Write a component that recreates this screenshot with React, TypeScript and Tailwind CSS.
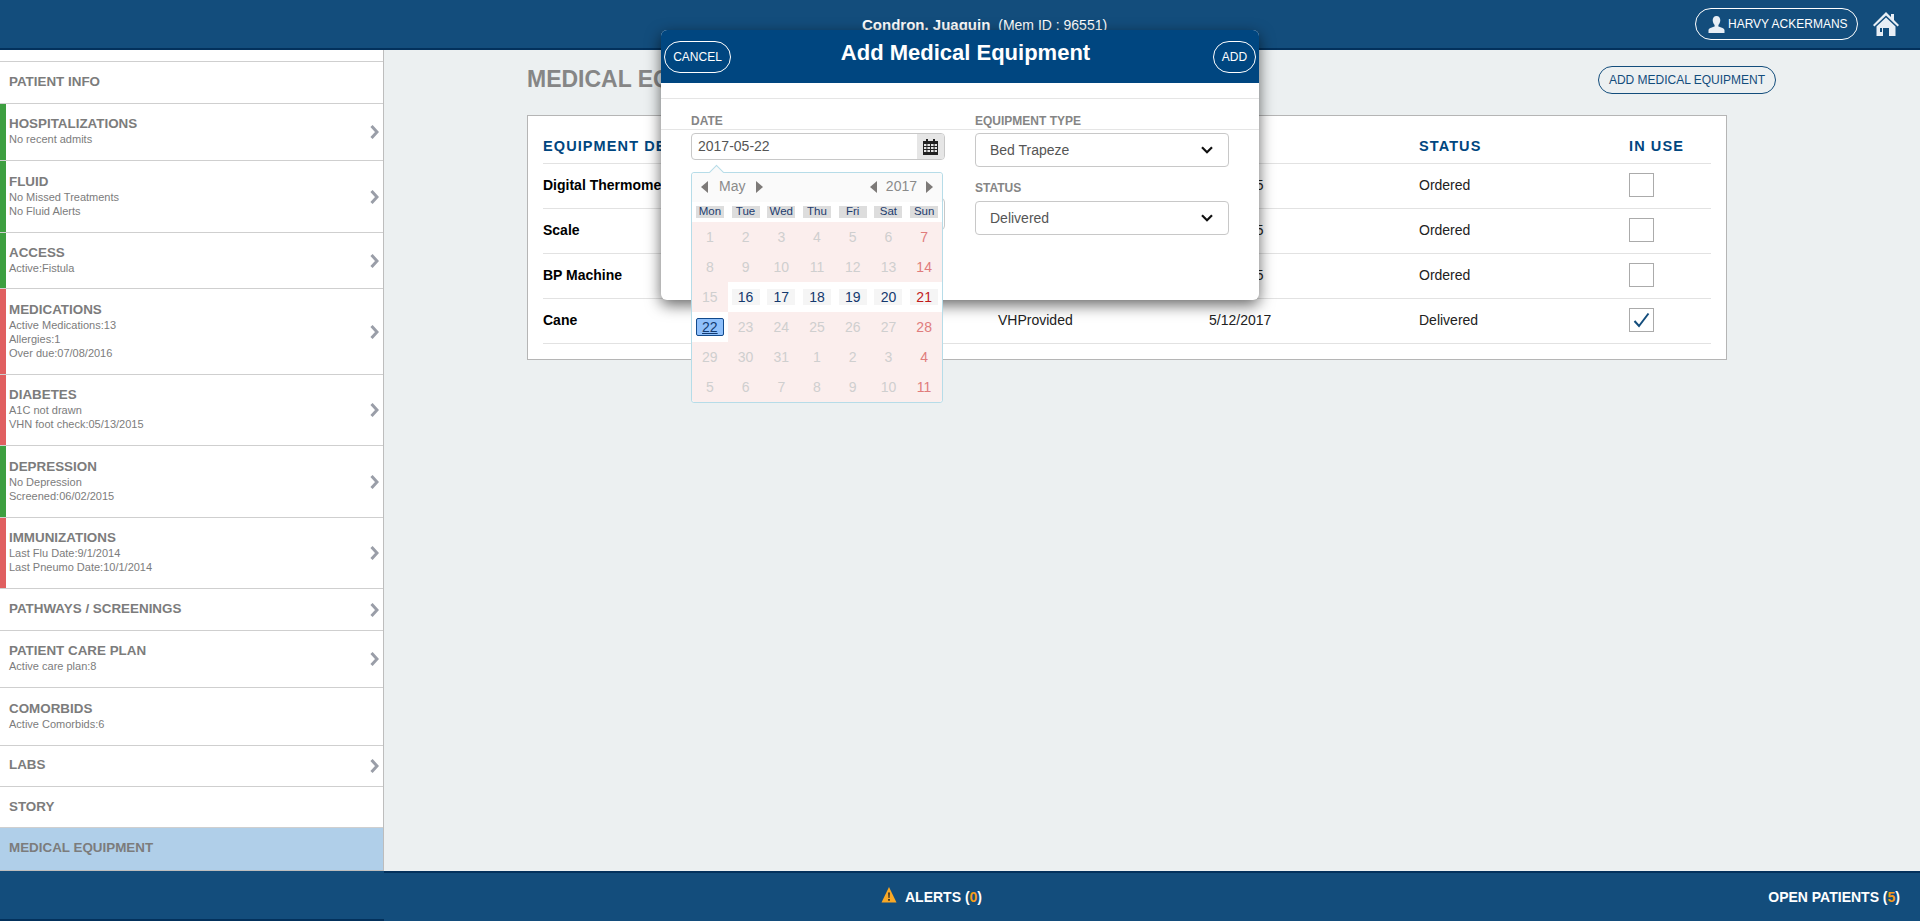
const sideRows = [
  { title: 'PATIENT INFO', sub: [], h: 'h-[42px]', bar: '', arrow: false },
  { title: 'HOSPITALIZATIONS', sub: ['No recent admits'], h: 'h-[57px]', bar: 'bg-[#3d9f40]', arrow: true },
  { title: 'FLUID', sub: ['No Missed Treatments', 'No Fluid Alerts'], h: 'h-[72px]', bar: 'bg-[#3d9f40]', arrow: true },
  { title: 'ACCESS', sub: ['Active:Fistula'], h: 'h-[56px]', bar: 'bg-[#3d9f40]', arrow: true },
  { title: 'MEDICATIONS', sub: ['Active Medications:13', 'Allergies:1', 'Over due:07/08/2016'], h: 'h-[86px]', bar: 'bg-[#e05f60]', arrow: true },
  { title: 'DIABETES', sub: ['A1C not drawn', 'VHN foot check:05/13/2015'], h: 'h-[71px]', bar: 'bg-[#e05f60]', arrow: true },
  { title: 'DEPRESSION', sub: ['No Depression', 'Screened:06/02/2015'], h: 'h-[72px]', bar: 'bg-[#3d9f40]', arrow: true },
  { title: 'IMMUNIZATIONS', sub: ['Last Flu Date:9/1/2014', 'Last Pneumo Date:10/1/2014'], h: 'h-[71px]', bar: 'bg-[#e05f60]', arrow: true },
  { title: 'PATHWAYS / SCREENINGS', sub: [], h: 'h-[42px]', bar: '', arrow: true },
  { title: 'PATIENT CARE PLAN', sub: ['Active care plan:8'], h: 'h-[57px]', bar: '', arrow: true },
  { title: 'COMORBIDS', sub: ['Active Comorbids:6'], h: 'h-[58px]', bar: '', arrow: false },
  { title: 'LABS', sub: [], h: 'h-[41px]', bar: '', arrow: true },
  { title: 'STORY', sub: [], h: 'h-[41px] pt-[2px]', bar: '', arrow: false },
];

const equipment = [
  { name: 'Digital Thermometer', type: 'VHProvided', date: '5/1/2015', status: 'Ordered', inUse: false },
  { name: 'Scale', type: 'VHProvided', date: '5/1/2015', status: 'Ordered', inUse: false },
  { name: 'BP Machine', type: 'VHProvided', date: '5/1/2015', status: 'Ordered', inUse: false },
  { name: 'Cane', type: 'VHProvided', date: '5/12/2017', status: 'Delivered', inUse: true },
];

const weekdays = ['Mon', 'Tue', 'Wed', 'Thu', 'Fri', 'Sat', 'Sun'];
const weeks = [
  [1, 2, 3, 4, 5, 6, 7],
  [8, 9, 10, 11, 12, 13, 14],
  [15, 16, 17, 18, 19, 20, 21],
  [22, 23, 24, 25, 26, 27, 28],
  [29, 30, 31, 1, 2, 3, 4],
  [5, 6, 7, 8, 9, 10, 11],
];

function Triangle({ left }: { left?: boolean }) {
  return (
    <svg width="7" height="12" viewBox="0 0 7 12" className="fill-[#7d7a78]">
      <path d={left ? 'M7 0V12L0 6Z' : 'M0 0V12L7 6Z'} />
    </svg>
  );
}

function SelectChevron() {
  return (
    <svg width="12" height="8" viewBox="0 0 12 8" fill="none" className="stroke-[#111]">
      <path d="M1 1.2L6 6.2L11 1.2" strokeWidth="2.2" />
    </svg>
  );
}

function SideItem({ row }: { row: (typeof sideRows)[number] }) {
  return (
    <div className={`relative flex items-center border-b border-[#cfcfcf] bg-white pl-[9px] pr-[4px] pb-[2px] ${row.h}`}>
      {row.bar && <div className={`absolute left-0 top-0 bottom-0 w-[6px] ${row.bar}`} />}
      <div className="flex-1">
        <div className="text-[13.4px] font-bold leading-[16px] text-[#7c7c7c]">{row.title}</div>
        {row.sub.map((s) => (
          <div key={s} className="text-[11px] leading-[14px] text-[#7c7c7c]">{s}</div>
        ))}
      </div>
      {row.arrow && (
        <svg width="9" height="14" viewBox="0 0 9 14" fill="none" className="mt-[2px] stroke-[#9a9ea8]">
          <path d="M1.5 1L7 7L1.5 13" strokeWidth="3" />
        </svg>
      )}
    </div>
  );
}

function DayCell({ day, week, col }: { day: number; week: number; col: number }) {
  const open = week === 2 && col > 0;
  const selected = week === 3 && col === 0;
  const sunday = col === 6;

  if (selected) {
    return (
      <div className="flex items-center justify-center bg-white">
        <span className="w-[28px] h-[18px] flex items-center justify-center rounded-[2px] border border-[#124a8c] bg-[#8fc0fb] text-[14px] leading-none underline text-[#123a70]">
          {day}
        </span>
      </div>
    );
  }
  if (open) {
    return (
      <div className="flex items-center justify-center bg-white">
        <span className={`w-[28px] h-[16px] flex items-center justify-center bg-[#f5f5f5] text-[14px] leading-none ${sunday ? 'text-[#c21a1a]' : 'text-[#14396e]'}`}>
          {day}
        </span>
      </div>
    );
  }
  return (
    <div className={`flex items-center justify-center bg-[#fbeeed] text-[14px] ${sunday ? 'text-[#e07c7c]' : 'text-[#cfcfcf]'}`}>
      {day}
    </div>
  );
}

function DatePicker() {
  return (
    <div className="absolute left-[30px] top-[142px] z-10 w-[252px] h-[231px] rounded-[3px] border border-[#b6dce8] bg-white">
      <div className="absolute left-[19px] top-[-6px] w-[11px] h-[11px] rotate-45 border-l border-t border-[#b6dce8] bg-[#fafafa]" />
      <div className="relative flex items-center justify-between h-[29px] px-[9px] pb-[2px] bg-[#fafafa] text-[14px] text-[#8a8a8a] rounded-t-[3px]">
        <div className="flex items-center gap-[11px]">
          <Triangle left />
          <span>May</span>
          <Triangle />
        </div>
        <div className="flex items-center gap-[9px]">
          <Triangle left />
          <span>2017</span>
          <Triangle />
        </div>
      </div>
      <div className="grid grid-cols-7 h-[20px] bg-white">
        {weekdays.map((d) => (
          <div key={d} className="flex items-center justify-center">
            <span className="w-[28px] h-[12px] flex items-center justify-center bg-[#dddddd] text-[11.5px] leading-none text-[#1c3c6e]">{d}</span>
          </div>
        ))}
      </div>
      <div className="grid grid-cols-7 auto-rows-[30px] overflow-hidden rounded-b-[3px]">
        {weeks.map((week, w) =>
          week.map((day, c) => <DayCell key={`${w}-${c}`} day={day} week={w} col={c} />),
        )}
      </div>
    </div>
  );
}

function AddEquipmentModal() {
  return (
    <div className="absolute left-[661px] top-[30px] z-20 w-[598px] h-[270px] rounded-[6px] bg-white shadow-[0_5px_15px_rgba(0,0,0,0.6)]">
      <div className="relative flex items-center justify-between h-[53px] px-[3px] rounded-t-[6px] bg-[#004680] text-white">
        <button className="w-[67px] h-[32px] rounded-full border border-white text-[12px]">CANCEL</button>
        <div className="absolute inset-x-0 top-[8px] pl-[11px] text-center text-[22px] font-bold leading-[30px]">Add Medical Equipment</div>
        <button className="relative w-[43px] h-[32px] rounded-full border border-white text-[12px]">ADD</button>
      </div>
      <div className="h-[16px] border-b border-[#e5e5e5]" />
      <div className="flex gap-[30px] h-[31px] pl-[30px] pt-[14px] border-b border-[#e5e5e5] text-[12px] font-bold leading-[16px] text-[#858585]">
        <div className="w-[254px]">DATE</div>
        <div className="w-[254px]">EQUIPMENT TYPE</div>
      </div>
      <div className="flex gap-[30px] pl-[30px] pt-[3px]">
        <div className="w-[254px]">
          <div className="flex h-[27px] rounded-[4px] border border-[#c8c8c8] overflow-hidden">
            <div className="flex-1 pl-[6px] text-[14px] leading-[24px] text-[#555]">2017-05-22</div>
            <div className="flex items-center justify-center w-[27px] bg-[#e6e6e6]">
              <svg width="15" height="16" viewBox="0 0 15 16" className="fill-[#222]">
                <path d="M3 0h2v2h5V0h2v2h3v14H0V2h3Zm-2 5v2h2.4V5Zm3.4 0v2h2.6V5Zm3.6 0v2h2.6V5Zm3.6 0v2H14V5ZM1 8v2h2.4V8Zm3.4 0v2h2.6V8Zm3.6 0v2h2.6V8Zm3.6 0v2H14V8ZM1 11v2h2.4v-2Zm3.4 0v2h2.6v-2Zm3.6 0v2h2.6v-2Zm3.6 0v2H14v-2Z" />
              </svg>
            </div>
          </div>
          <div className="mt-[38px] h-[32px] rounded-[4px] border border-[#c8c8c8]" />
        </div>
        <div className="w-[254px]">
          <div className="flex items-center justify-between h-[34px] pl-[14px] pr-[15px] rounded-[4px] border border-[#c8c8c8] text-[14px] text-[#555]">
            Bed Trapeze
            <SelectChevron />
          </div>
          <div className="mt-[11px] mb-[3px] text-[12px] font-bold leading-[20px] text-[#858585]">STATUS</div>
          <div className="flex items-center justify-between h-[34px] pl-[14px] pr-[15px] rounded-[4px] border border-[#c8c8c8] text-[14px] text-[#555]">
            Delivered
            <SelectChevron />
          </div>
        </div>
      </div>
      <DatePicker />
    </div>
  );
}

export default function App() {
  return (
    <div className="relative flex flex-col h-screen overflow-hidden bg-[#ecf0f1] font-['Liberation_Sans',Arial,sans-serif]">
      {/* header */}
      <header className="relative flex items-center h-[50px] shrink-0 bg-[#134d7c] border-b-2 border-[#03315c] text-white">
        <div className="absolute left-[862px] top-[15px] leading-[20px] whitespace-nowrap">
          <span className="text-[15px] font-bold">Condron, Juaquin</span>
          <span className="ml-[4px] text-[14px]"> (Mem ID : 96551)</span>
        </div>
        <div className="ml-auto flex items-center gap-[15px] pr-[21px]">
          <div className="flex items-center gap-[3px] h-[32px] w-[163px] pl-[12px] rounded-full border border-white text-[12px]">
            <svg width="17" height="17" viewBox="0 0 17 17" className="fill-[#e8eef5]">
              <path d="M8.5 0C11 0 12.3 2 12.3 4.3 12.3 6.6 11 8.2 10.4 9v1.6c1.6.8 6.1 1.6 6.1 3.6V17H.5v-2.8c0-2 4.5-2.8 6.1-3.6V9C6 8.2 4.7 6.6 4.7 4.3 4.7 2 6 0 8.5 0Z" />
            </svg>
            HARVY ACKERMANS
          </div>
          <svg width="26" height="24" viewBox="0 0 26 24" className="fill-[#e8eef5]">
            <path d="M13 0L18 5V2H21V8L26 13L24.6 14.6L13 3.4L1.4 14.6L0 13Z" />
            <path d="M13 5.5L22.5 14.5V24H16V16H10V24H3.5V14.5ZM7 16V20H9V16Z" fillRule="evenodd" />
          </svg>
        </div>
      </header>

      <div className="flex flex-1 min-h-0">
        {/* sidebar */}
        <aside className="w-[384px] shrink-0 border-r border-[#bdbdbd] bg-white">
          <div className="h-[12px] border-b border-[#cfcfcf]" />
          {sideRows.map((row) => (
            <SideItem key={row.title} row={row} />
          ))}
          <div className="flex items-center h-[43px] pl-[9px] pb-[1px] border-b border-[#bdbdbd] bg-[#b0cfe9] text-[13.4px] font-bold text-[#7c7c7c]">
            MEDICAL EQUIPMENT
          </div>
        </aside>

        {/* main */}
        <main className="flex-1 pl-[143px] pt-[16px]">
          <div className="flex items-center justify-between w-[1249px] h-[28px]">
            <h1 className="-mt-[2px] text-[23px] font-bold text-[#868686]">MEDICAL EQUIPMENT</h1>
            <button className="w-[178px] h-[28px] rounded-full border border-[#134d7c] text-[12px] text-[#134d7c]">
              ADD MEDICAL EQUIPMENT
            </button>
          </div>
          <div className="mt-[21px] w-[1200px] h-[245px] px-[15px] border border-[#b5b5b5] bg-white">
            <div className="grid grid-cols-[455px_211px_210px_210px_82px] items-center h-[48px] pt-[15px] border-b border-[#e2e2e2] text-[14.5px] font-bold tracking-[1.1px] text-[#004680]">
              <div className="whitespace-nowrap">EQUIPMENT DESCRIPTION</div>
              <div>TYPE</div>
              <div>DATE</div>
              <div>STATUS</div>
              <div>IN USE</div>
            </div>
            {equipment.map((item) => (
              <div key={item.name} className="grid grid-cols-[455px_211px_210px_210px_82px] items-center h-[45px] pb-[2px] border-b border-[#e2e2e2] text-[14px] text-[#222]">
                <div className="font-bold text-black">{item.name}</div>
                <div>{item.type}</div>
                <div>{item.date}</div>
                <div>{item.status}</div>
                <div className="flex items-center justify-center w-[25px] h-[24px] border border-[#ababab] bg-white">
                  {item.inUse && (
                    <svg width="17" height="16" viewBox="0 0 17 16" fill="none" className="stroke-[#134d7c]">
                      <path d="M1.5 9L6 14L15.5 1.5" strokeWidth="2" />
                    </svg>
                  )}
                </div>
              </div>
            ))}
          </div>
        </main>
      </div>

      {/* footer */}
      <footer className="flex h-[50px] shrink-0 bg-[#134d7c] text-white text-[14px] font-bold">
        <div className="w-[384px] shrink-0 border-b-2 border-[#03315c]" />
        <div className="flex-1 flex items-center justify-between pl-[497px] pr-[20px] border-t-2 border-[#03315c]">
          <div className="flex items-center gap-[8px]">
            <svg width="16" height="16" viewBox="0 0 16 16" className="mb-[4px]">
              <path d="M8 0L15.5 15.5H.5Z" className="fill-[#f9a825]" />
              <path d="M7.2 5.5h1.6l-.3 5.5h-1ZM7.2 12h1.6v1.7H7.2Z" className="fill-[#222]" />
            </svg>
            <span>ALERTS (<span className="text-[#f59c1a]">0</span>)</span>
          </div>
          <span>OPEN PATIENTS (<span className="text-[#f59c1a]">5</span>)</span>
        </div>
      </footer>

      <AddEquipmentModal />
    </div>
  );
}
